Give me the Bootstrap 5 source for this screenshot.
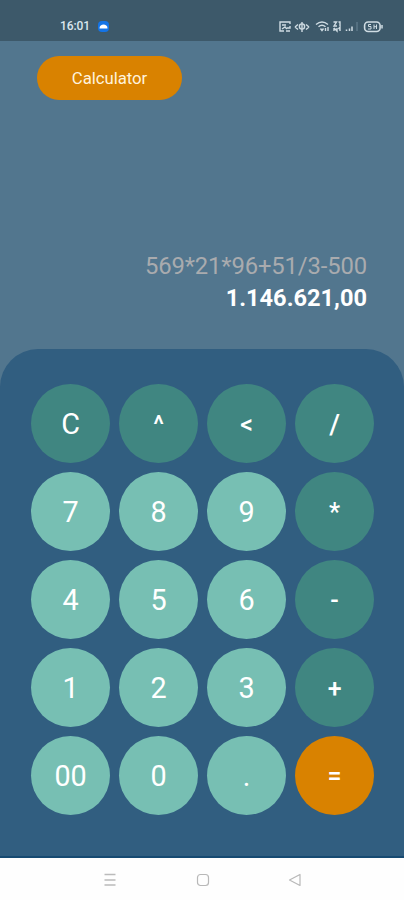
<!DOCTYPE html>
<html lang="en">
<head>
<meta charset="utf-8">
<meta name="viewport" content="width=device-width, initial-scale=1">
<title>Calculator</title>
<link href="https://cdn.jsdelivr.net/npm/bootstrap@5.3.0/dist/css/bootstrap.min.css" rel="stylesheet">
<style>
  body { font-family: Roboto, sans-serif; background: #52768e; }
  .phone { height: 900px; width: 404px; overflow: hidden; }
  .status-bar { height: 41px; background: #3d596a; padding: 12px 21px 0 60px; }
  .clock { font-size: 12px; line-height: 29px; color: #dbe7ee; letter-spacing: -.1px; font-weight: 500; }
  .display { height: 308px; padding: 15px 37px 0; }
  .title-pill { width: 145px; height: 44px; background: #d98200; color: #fff3dc; font-size: 16.8px; letter-spacing: -.05px; padding: 2px 0 0; }
  .title-pill:hover { background: #d98200; color: #fff3dc; }
  .expression { font-size: 23.8px; letter-spacing: -.12px; line-height: 32px; color: #a9abae; margin-top: 150px; }
  .result { font-size: 23.6px; line-height: 32px; color: #fff; }
  .keypad { height: 507px; background: #315e80; border-radius: 38px 38px 0 0; padding: 34.5px 30px 0 31px; }
  .key-grid { display: grid; grid-template-columns: repeat(4, 79px); grid-auto-rows: 79px; gap: 9px; }
  .key { background: #77bfb3; color: #fff; font-size: 28.8px; line-height: 79px; padding: 1px 0 0; letter-spacing: -.2px; }
  .key:hover { background: #77bfb3; color: #fff; }
  .key-op, .key-op:hover { background: #408681; }
  .key-eq, .key-eq:hover { background: #d98200; }
  .sym { font-size: 25px; font-weight: 500; }
  .sym-slash { font-size: 27.5px; }
  .nav-bar { height: 44px; background: #fefefe; border-top: 2px solid #164a72; padding: 2px 102px 0 103px; }
  svg { display: block; }
</style>
</head>
<body>
<div class="phone d-flex flex-column">
  <header class="status-bar d-flex justify-content-between">
    <div class="d-flex align-items-center">
      <span class="clock">16:01</span>
      <svg class="ms-2" width="11" height="11" viewBox="0 0 11 11"><rect width="11" height="11" rx="4" fill="#1474e6"/><path d="M1.500 7.500C1.500 4.500 3.500 3.500 5.500 3.500S9.500 4.500 9.500 7.500Z" fill="#fff"/></svg>
    </div>
    <svg width="105" height="29" viewBox="278 12 105 29" fill="none" stroke="#cfdce3" stroke-width="1.400">
      <path d="M290 24V22H280V31H284M282 25H286M282 29L285 27L287 29M286 31H290M287 28H290V26"/>
      <path d="M295 27L298 24.500M295 27L298 29.500M309 27L306 24.500M309 27L306 29.500M302 22V32"/><circle cx="302" cy="26.500" r="2.600"/>
      <path d="M316 24.500Q322 19.500 328 24.500M318.500 26.700Q322 23.800 325.500 26.700M320.500 28.500L322 30.500L323.500 28.500M325.500 31V28M328 31V27"/>
      <path d="M333.500 22H336.500L334 26H337M338.500 22H340V26M334 31V28M334 28L337 31V28M340 31V27L338.500 29"/>
      <path d="M346.500 31V29.500M349.500 31V28.500M352 31V26.500" stroke-width="1.500"/><path d="M357 31V22" stroke="#6d8797" stroke-width="1"/>
      <rect x="364.600" y="22" width="15.500" height="9.500" rx="3.500" stroke-width="1.600"/><path d="M382 25V28.500" stroke-width="1.500"/>
      <path d="M371 24.500H368.500V26.500H371V29H368M374 24.500V29M376.500 24.500V29M374 26.700H376.500" stroke-width="1"/>
    </svg>
  </header>
  <main class="display">
    <button class="title-pill btn border-0 rounded-pill">Calculator</button>
    <div class="expression text-end">569*21*96+51/3-500</div>
    <div class="result text-end fw-bold">1.146.621,00</div>
  </main>
  <section class="keypad">
    <div class="key-grid">
      <button class="key key-op btn border-0 rounded-circle">C</button>
      <button class="key key-op btn border-0 rounded-circle sym">^</button>
      <button class="key key-op btn border-0 rounded-circle sym">&lt;</button>
      <button class="key key-op btn border-0 rounded-circle sym sym-slash">/</button>
      <button class="key btn border-0 rounded-circle">7</button>
      <button class="key btn border-0 rounded-circle">8</button>
      <button class="key btn border-0 rounded-circle">9</button>
      <button class="key key-op btn border-0 rounded-circle sym">*</button>
      <button class="key btn border-0 rounded-circle">4</button>
      <button class="key btn border-0 rounded-circle">5</button>
      <button class="key btn border-0 rounded-circle">6</button>
      <button class="key key-op btn border-0 rounded-circle sym">-</button>
      <button class="key btn border-0 rounded-circle">1</button>
      <button class="key btn border-0 rounded-circle">2</button>
      <button class="key btn border-0 rounded-circle">3</button>
      <button class="key key-op btn border-0 rounded-circle sym">+</button>
      <button class="key btn border-0 rounded-circle">00</button>
      <button class="key btn border-0 rounded-circle">0</button>
      <button class="key btn border-0 rounded-circle">.</button>
      <button class="key key-eq btn border-0 rounded-circle sym">=</button>
    </div>
  </section>
  <footer class="nav-bar d-flex justify-content-between align-items-center">
    <svg width="14" height="14" viewBox="0 0 14 14" stroke="#bbb" stroke-width="1.300"><path d="M1.500 1.500H12.500M1.500 7H12.500M1.500 12H12.500"/></svg>
    <svg width="14" height="14" viewBox="0 0 14 14" fill="none" stroke="#b8b8b8" stroke-width="1.200"><rect x="1.500" y="1.500" width="11" height="11" rx="3"/></svg>
    <svg width="14" height="14" viewBox="0 0 14 14" fill="none" stroke="#b8b8b8" stroke-width="1.200" stroke-linejoin="round"><path d="M1.500 7L12 1.500V12.500Z"/></svg>
  </footer>
</div>
<script src="https://cdn.jsdelivr.net/npm/bootstrap@5.3.0/dist/js/bootstrap.bundle.min.js"></script>
</body>
</html>
